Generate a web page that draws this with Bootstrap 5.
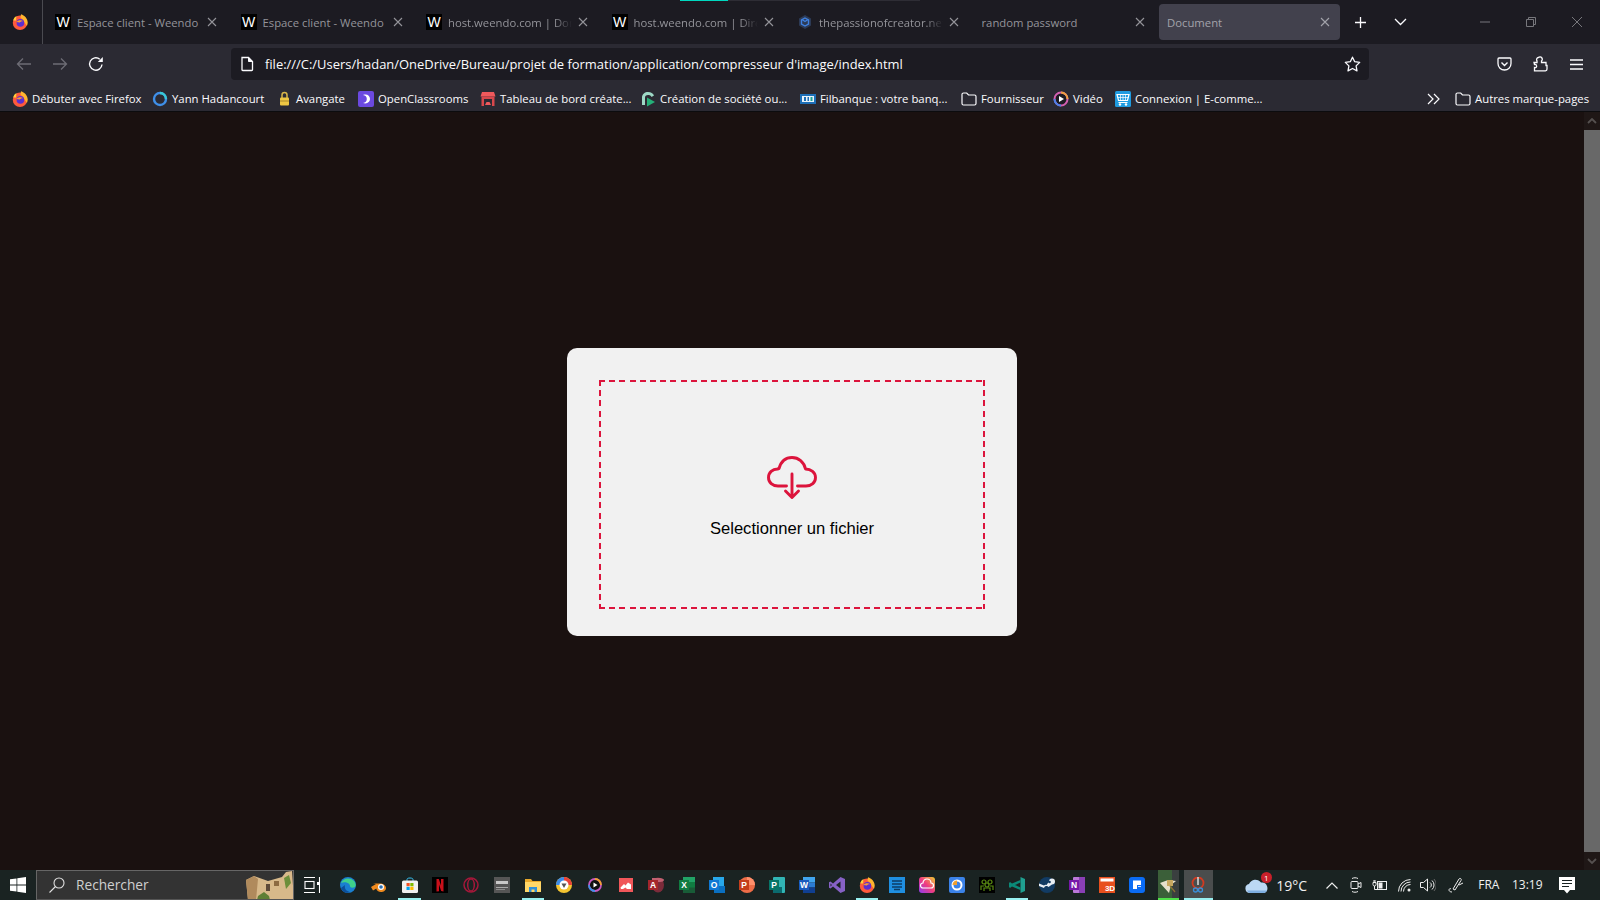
<!DOCTYPE html>
<html lang="fr">
<head>
<meta charset="UTF-8">
<title>Document</title>
<link href="https://cdn.jsdelivr.net/npm/bootstrap@5.3.2/dist/css/bootstrap.min.css" rel="stylesheet">
<style>
html, body { height: 100%; overflow: hidden; }
body { background: #1a1110; font-family: "Open Sans", "Noto Sans", sans-serif; color: #fbfbfe; }
svg { display: block; flex-shrink: 0; }

/* tab strip */
.tab-strip { height: 44px; background: #1c1b22; }
.ff-cell { width: 43px; height: 44px; border-right: 1px solid #4a4a50; }
.tab-row { gap: 4.5px; margin-left: 3px; }
.fx-tab { width: 181px; height: 36px; margin-top: 4px; padding: 0 10px 0 9px; border-radius: 4px; font-size: 11.3px; color: #94949a; gap: 6px; }
.fx-tab.no-fav { padding-left: 8px; }
.fx-tab.active { background: #42414d; color: #a3a3ab; }
.fx-tab .tab-title { flex: 1; white-space: nowrap; overflow: hidden; min-width: 0; padding-top: 2px; }
.fx-tab .faded { -webkit-mask-image: linear-gradient(90deg, #000 86%, transparent 100%); mask-image: linear-gradient(90deg, #000 86%, transparent 100%); }
.fav-w { width: 16px; height: 16px; background: #000; color: #fff; font: 14px/16px "Liberation Sans", sans-serif; text-align: center; }
.strip-btn { width: 40px; height: 44px; }
.win-btn { width: 46px; height: 44px; }
.load-line { position: absolute; left: 680px; top: 0; width: 48px; height: 1px; background: #00d8c0; }
.load-track { position: absolute; left: 728px; top: 0; width: 192px; height: 1px; background: #2e2d35; }

/* toolbar */
.tool-bar { height: 40px; background: #2b2a33; padding-left: 6px; }
.nav-btn { width: 36px; height: 40px; }
.url-bar { width: 1138px; height: 32px; margin-left: 117px; margin-top: 4px; padding: 0 8px 0 9px; background: #1c1b22; border-radius: 4px; font-size: 12.95px; color: #fbfbfe; gap: 11px; }
.url-text { flex: 1; white-space: nowrap; padding-top: 2px; }
.tool-end { width: 36px; height: 40px; }
.tool-right { margin-left: 117px; }

/* bookmarks */
.book-bar { height: 28px; background: #2b2a33; padding-left: 12px; font-size: 11.35px; border-bottom: 1px solid #0c0c0e; }
.book-item { gap: 4px; white-space: nowrap; height: 27px; padding-top: 2px; }
.book-item:nth-child(1) { width: 140px; }
.book-item:nth-child(2) { width: 125px; }
.book-item:nth-child(3) { width: 81px; }
.book-item:nth-child(4) { width: 122px; }
.book-item:nth-child(5) { width: 161px; }
.book-item:nth-child(6) { width: 159px; }
.book-item:nth-child(7) { width: 161px; }
.book-item:nth-child(8) { width: 92px; }
.book-item:nth-child(9) { width: 62px; }
.book-item:nth-child(10) { width: 312px; }
.book-item:nth-child(11) { width: 28px; }

/* page */
.page-zone { min-height: 0; }
.scroll-rail { width: 16px; background: #1f1716; }
.rail-arrow { height: 18px; }
.rail-thumb { flex: 1; background: #686868; }
.upload-main { padding-top: 2px; }
.upload-box { width: 450px; height: 288px; padding: 32px 32px 27px; background: #f1f1f1; border: 0; border-radius: 10px; }
.drop-zone {
  height: 229px; gap: 19px; cursor: pointer; margin: 0; padding-top: 6px;
  background:
    repeating-linear-gradient(90deg, #dc143c 0 6px, transparent 6px 10.2px) top / 100% 2px no-repeat,
    repeating-linear-gradient(90deg, #dc143c 0 6px, transparent 6px 10.2px) bottom / 100% 2px no-repeat,
    repeating-linear-gradient(180deg, #dc143c 0 6px, transparent 6px 10.2px) left / 2px 100% no-repeat,
    repeating-linear-gradient(180deg, #dc143c 0 6px, transparent 6px 10.2px) right / 2px 100% no-repeat;
}
.drop-label { font: 16.6px/20px "Liberation Sans", Arial, sans-serif; color: #000; }

/* taskbar */
.task-bar { height: 30px; background: #1a2322; }
.start-cell { width: 36px; }
.search-box { width: 258px; height: 30px; background: #333; border: 1px solid #666; border-bottom-color: #555; padding-left: 12px; font-size: 13.7px; color: #cfcfcf; gap: 11px; overflow: hidden; }
.search-art { margin-left: auto; margin-right: -1px; }
.view-cell { width: 38.5px; padding-right: 2px; }
.app-cell { width: 30.85px; height: 30px; }
.app-cell.narrow { width: 30px; }
.app-cell.on::after, .run-cell::after { content: ""; position: absolute; left: 4px; right: 4px; bottom: 0; height: 2px; background: #99f0f0; }
.run-cell { height: 30px; }
.run-a { width: 21px; margin-left: 6px; background: linear-gradient(90deg, #3b5f39 0 14px, #3a3f3f 14px); }
.run-a::after { left: 0 !important; right: 0 !important; background: #4fe04a !important; }
.run-b { width: 29px; margin-left: 5px; background: #4a4d4d; }
.run-b::after { left: 0 !important; right: 0 !important; }
.tray { margin-left: 32px; display: grid; grid-template-columns: 24px 46px 34px 15px 32px 18px 28px 28px 38px 39px 40px; align-items: center; height: 30px; font-size: 12px; color: #f0f0f0; }
.tray > * { justify-self: center; }
.temp-text { font-size: 14px; }
.weather { position: relative; }
.weather-dot { position: absolute; right: -3px; top: -6px; width: 11px; height: 11px; border-radius: 50%; background: #c8202a; color: #fff; font-size: 8px; line-height: 11px; text-align: center; }
</style>
</head>
<body class="d-flex flex-column">

<svg width="0" height="0" class="position-absolute">
  <defs>
    <symbol id="ic-firefox" viewBox="0 0 16 16">
      <circle cx="8" cy="8.800" r="7.200" fill="#ff5a3c"/>
      <path d="M9 .3c3.500 1 6.700 4.500 6.700 8.200 0 1.200-.3 2.300-.8 3.500L11 6 8.500 3.500z" fill="#ffb52e"/>
      <path d="M1.200 6.500c.7-2.500 1.800-3.800 3.300-4.500L4 6.500z" fill="#ffcf3a"/>
      <circle cx="8.400" cy="8.900" r="3.800" fill="#5c2fd0"/>
      <path d="M4.500 8c1.300-1.800 4.700-2.500 7-.6-1.200-.2-3 .1-3.700 1.100z" fill="#ff9a2e"/>
    </symbol>
    <symbol id="ic-folder" viewBox="0 0 16 16">
      <path d="M1 3.500C1 2.700 1.700 2 2.500 2h3.200L7.500 4h6C14.300 4 15 4.700 15 5.500v7c0 .8-.7 1.500-1.500 1.500h-11C1.700 14 1 13.300 1 12.500z" fill="none" stroke="#fbfbfe" stroke-width="1.200"/>
    </symbol>
    <symbol id="ic-close" viewBox="0 0 10 10">
      <path d="M1 1l8 8M9 1L1 9" stroke="currentColor" stroke-width="1.100" fill="none"/>
    </symbol>
  </defs>
</svg>

<!-- tab strip -->
<div class="tab-strip d-flex position-relative">
  <div class="load-line"></div>
  <div class="load-track"></div>
  <div class="ff-cell d-flex align-items-center ps-2 ms-0">
    <svg width="16" height="16" class="ms-1"><use href="#ic-firefox"/></svg>
  </div>
  <div class="tab-row d-flex">
    <div class="fx-tab d-flex align-items-center">
      <span class="fav-w">W</span><span class="tab-title">Espace client - Weendo</span>
      <svg width="10" height="10"><use href="#ic-close"/></svg>
    </div>
    <div class="fx-tab d-flex align-items-center">
      <span class="fav-w">W</span><span class="tab-title">Espace client - Weendo</span>
      <svg width="10" height="10"><use href="#ic-close"/></svg>
    </div>
    <div class="fx-tab d-flex align-items-center">
      <span class="fav-w">W</span><span class="tab-title faded">host.weendo.com | Dom</span>
      <svg width="10" height="10"><use href="#ic-close"/></svg>
    </div>
    <div class="fx-tab d-flex align-items-center">
      <span class="fav-w">W</span><span class="tab-title faded">host.weendo.com | Direc</span>
      <svg width="10" height="10"><use href="#ic-close"/></svg>
    </div>
    <div class="fx-tab d-flex align-items-center">
      <svg width="16" height="16" viewBox="0 0 16 16"><path d="M8 1l6 3.500v7L8 15l-6-3.500v-7z" fill="#2c3a55"/><path d="M8 4l3.500 2v4L8 12l-3.500-2V6z" fill="none" stroke="#3f80e0" stroke-width="1.400"/><path d="M5 5.500l3 2 3-2" fill="none" stroke="#3f80e0" stroke-width="1.400"/></svg>
      <span class="tab-title faded">thepassionofcreator.net/</span>
      <svg width="10" height="10"><use href="#ic-close"/></svg>
    </div>
    <div class="fx-tab no-fav d-flex align-items-center">
      <span class="tab-title">random password</span>
      <svg width="10" height="10"><use href="#ic-close"/></svg>
    </div>
    <div class="fx-tab no-fav active d-flex align-items-center">
      <span class="tab-title">Document</span>
      <svg width="10" height="10"><use href="#ic-close"/></svg>
    </div>
  </div>
  <div class="strip-btn d-flex align-items-center justify-content-center ms-0">
    <svg width="13" height="13" viewBox="0 0 13 13"><path d="M6.500 1v11M1 6.500h11" stroke="#fbfbfe" stroke-width="1.300"/></svg>
  </div>
  <div class="strip-btn d-flex align-items-center justify-content-center">
    <svg width="13" height="8" viewBox="0 0 13 8"><path d="M1 1l5.500 5.500L12 1" fill="none" stroke="#fbfbfe" stroke-width="1.300"/></svg>
  </div>
  <div class="win-btn d-flex align-items-center justify-content-center ms-auto">
    <svg width="10" height="2" viewBox="0 0 10 2"><path d="M0 1h10" stroke="#77777c" stroke-width="1"/></svg>
  </div>
  <div class="win-btn d-flex align-items-center justify-content-center">
    <svg width="10" height="10" viewBox="0 0 10 10"><path d="M.5 2.500h7v7h-7zM2.500 2.500v-2h7v7h-2" fill="none" stroke="#77777c"/></svg>
  </div>
  <div class="win-btn d-flex align-items-center justify-content-center">
    <svg width="10" height="10" viewBox="0 0 10 10"><path d="M0 0l10 10M10 0L0 10" stroke="#77777c"/></svg>
  </div>
</div>

<!-- toolbar -->
<div class="tool-bar d-flex">
  <div class="nav-btn d-flex align-items-center justify-content-center">
    <svg width="16" height="14" viewBox="0 0 16 14"><path d="M15 7H1.500M7 1.500L1.500 7 7 12.500" fill="none" stroke="#6d6c75" stroke-width="1.300"/></svg>
  </div>
  <div class="nav-btn d-flex align-items-center justify-content-center">
    <svg width="16" height="14" viewBox="0 0 16 14"><path d="M1 7h13.500M9 1.500L14.500 7 9 12.500" fill="none" stroke="#6d6c75" stroke-width="1.300"/></svg>
  </div>
  <div class="nav-btn d-flex align-items-center justify-content-center">
    <svg width="16" height="16" viewBox="0 0 16 16"><path d="M14 8.500A6.200 6.200 0 1 1 11.800 3.200" fill="none" stroke="#fbfbfe" stroke-width="1.400"/><path d="M14.800 1v5h-5z" fill="#fbfbfe"/></svg>
  </div>
  <div class="url-bar d-flex align-items-center">
    <svg width="14" height="16" viewBox="0 0 14 16"><path d="M2 1.500h6.500L12.500 5.500v8.200c0 .5-.4.800-.8.800H2.800c-.5 0-.8-.4-.8-.8z" fill="none" stroke="#fbfbfe" stroke-width="1.300"/><path d="M8.500 1.500v4h4" fill="#fbfbfe" stroke="#fbfbfe"/></svg>
    <span class="url-text">file:///C:/Users/hadan/OneDrive/Bureau/projet de formation/application/compresseur d'image/index.html</span>
    <svg width="17" height="16" viewBox="0 0 17 16"><path d="M8.500 1.200l2.200 4.500 5 .7-3.600 3.500.9 5-4.500-2.400L4 14.900l.9-5L1.300 6.400l5-.7z" fill="none" stroke="#fbfbfe" stroke-width="1.300" stroke-linejoin="round"/></svg>
  </div>
  <div class="tool-end tool-right d-flex align-items-center justify-content-center">
    <svg width="15" height="14" viewBox="0 0 15 14"><path d="M2 1h11c.6 0 1 .4 1 1v4.500C14 10.500 11 13 7.500 13S1 10.500 1 6.500V2c0-.6.4-1 1-1z" fill="none" stroke="#fbfbfe" stroke-width="1.300"/><path d="M4.500 5.500l3 3 3-3" fill="none" stroke="#fbfbfe" stroke-width="1.400"/></svg>
  </div>
  <div class="tool-end d-flex align-items-center justify-content-center">
    <svg width="15" height="16" viewBox="0 0 15 16"><path d="M1 6.500h3V5a2.200 2.200 0 0 1 1.500-3.500A2.200 2.200 0 0 1 8.500 5v1.500H13v3h1V13c0 1-.5 1.800-1.500 1.800H1.500V11.500a1.500 1.500 0 0 0 2-2 1.500 1.500 0 0 0-2-1z" fill="none" stroke="#fbfbfe" stroke-width="1.300"/></svg>
  </div>
  <div class="tool-end d-flex align-items-center justify-content-center">
    <svg width="13" height="11" viewBox="0 0 13 11"><path d="M0 1h13M0 5.500h13M0 10h13" stroke="#fbfbfe" stroke-width="1.300"/></svg>
  </div>
</div>

<!-- bookmarks -->
<div class="book-bar d-flex">
  <div class="book-item d-flex align-items-center"><svg width="16" height="16"><use href="#ic-firefox"/></svg>Débuter avec Firefox</div>
  <div class="book-item d-flex align-items-center">
    <svg width="16" height="16" viewBox="0 0 16 16"><circle cx="8" cy="8" r="6" fill="none" stroke="#3f8fe8" stroke-width="2.400"/><path d="M8 2a6 6 0 0 1 6 6" fill="none" stroke="#38c9d8" stroke-width="2.400"/></svg>Yann Hadancourt</div>
  <div class="book-item d-flex align-items-center">
    <svg width="15" height="16" viewBox="0 0 15 16"><path d="M5 7V4a2.500 2.500 0 0 1 5 0v3" fill="none" stroke="#d9b64a" stroke-width="1.500"/><rect x="3" y="6.500" width="9" height="8" rx="1" fill="#eec643"/><path d="M3 10h9" stroke="#a8862a"/></svg>Avangate</div>
  <div class="book-item d-flex align-items-center">
    <svg width="16" height="16" viewBox="0 0 16 16"><rect width="16" height="16" rx="2" fill="#6b49e0"/><path d="M5 4c4-1.500 7 1 7 4s-3 5.500-7 4c2.500-.3 3.800-2 3.800-4S7.500 4.300 5 4z" fill="#fff"/></svg>OpenClassrooms</div>
  <div class="book-item d-flex align-items-center">
    <svg width="16" height="16" viewBox="0 0 16 16"><path d="M2 1h12l1.500 4.500H.5z" fill="#f0595c"/><rect x="1.500" y="5.500" width="13" height="9.500" fill="#d8484c"/><rect x="4" y="8" width="8" height="7" fill="#2b2a33"/><path d="M5 14l1.500-3h3l1.500 3" fill="#f0595c"/></svg>Tableau de bord créate...</div>
  <div class="book-item d-flex align-items-center">
    <svg width="15" height="16" viewBox="0 0 15 16"><path d="M1 14V6.500C1 3 4 1 7 1s5 1.500 6 3.500L10.500 6C10 4.500 8.500 4 7 4 5 4 4 5 4 6.500V14z" fill="#9ed8c6"/><path d="M6 6.500l8 4.500-8 4.500z" fill="#25b078"/></svg>Création de société ou...</div>
  <div class="book-item d-flex align-items-center">
    <svg width="16" height="10" viewBox="0 0 16 10"><rect width="16" height="10" fill="#1d6fb8"/><rect x="2" y="2" width="12" height="6" fill="#e9f3fb"/><rect x="4" y="3" width="2" height="4" fill="#1d6fb8"/><rect x="7.500" y="3" width="1.500" height="4" fill="#1d6fb8"/><rect x="10.500" y="3" width="2" height="4" fill="#1aa59a"/></svg>Filbanque : votre banq...</div>
  <div class="book-item d-flex align-items-center"><svg width="16" height="16"><use href="#ic-folder"/></svg>Fournisseur</div>
  <div class="book-item d-flex align-items-center">
    <svg width="16" height="16" viewBox="0 0 16 16"><circle cx="8" cy="8" r="6.500" fill="#1c1b22" stroke="#d35fb0" stroke-width="2"/><path d="M8 1.500A6.500 6.500 0 0 1 14.500 8" fill="none" stroke="#f0a040" stroke-width="2"/><path d="M1.500 8A6.500 6.500 0 0 0 8 14.500" fill="none" stroke="#4a80e8" stroke-width="2"/><path d="M6 5l5 3-5 3z" fill="#fff"/></svg>Vidéo</div>
  <div class="book-item d-flex align-items-center">
    <svg width="16" height="16" viewBox="0 0 16 16"><rect width="16" height="16" rx="1.500" fill="#1f9be0"/><path d="M2 3.500h12l-1.500 6h-9zM3.500 11.500h9" fill="none" stroke="#fff" stroke-width="1.200"/><path d="M5.500 3.500v6M8 3.500v6M10.500 3.500v6M2.500 6.500h11" stroke="#fff" stroke-width=".7"/><circle cx="5" cy="13.500" r="1.200" fill="#fff"/><circle cx="11" cy="13.500" r="1.200" fill="#fff"/></svg>Connexion | E-comme...</div>
  <div class="book-item d-flex align-items-center">
    <svg width="13" height="12" viewBox="0 0 13 12"><path d="M1 1l5 5-5 5M7 1l5 5-5 5" fill="none" stroke="#fbfbfe" stroke-width="1.200"/></svg>
  </div>
  <div class="book-item d-flex align-items-center"><svg width="16" height="16"><use href="#ic-folder"/></svg>Autres marque-pages</div>
</div>

<!-- page -->
<div class="page-zone flex-grow-1 d-flex">
  <main class="upload-main flex-grow-1 d-flex align-items-center justify-content-center">
    <div class="card upload-box">
      <label class="drop-zone d-flex flex-column align-items-center justify-content-center">
        <input type="file" class="d-none">
        <svg width="50" height="44" viewBox="0 0 50 44" fill="none" stroke="#dc143c" stroke-width="2.900" stroke-linecap="round" stroke-linejoin="round">
          <path d="M19.500 30H11C5.500 30 1.500 26.500 1.500 21.500 1.500 16.500 5.500 13 10.500 13L12 12.500C14 5.500 19 1.500 25 1.500 31.500 1.500 37 6 38.500 13 44 13 48.500 16.500 48.500 21.500 48.500 26.500 44.500 30 39 30H30.500"/>
          <path d="M25 18V41.500M18.500 35L25 41.500 31.500 35"/>
        </svg>
        <span class="drop-label">Selectionner un fichier</span>
      </label>
    </div>
  </main>
  <div class="scroll-rail d-flex flex-column">
    <div class="rail-arrow d-flex align-items-center justify-content-center">
      <svg width="10" height="6" viewBox="0 0 10 6"><path d="M1 5l4-4 4 4" fill="none" stroke="#55504f" stroke-width="1.800"/></svg>
    </div>
    <div class="rail-thumb"></div>
    <div class="rail-arrow d-flex align-items-center justify-content-center">
      <svg width="10" height="6" viewBox="0 0 10 6"><path d="M1 1l4 4 4-4" fill="none" stroke="#55504f" stroke-width="1.800"/></svg>
    </div>
  </div>
</div>

<!-- taskbar -->
<footer class="task-bar d-flex align-items-center">
  <div class="start-cell d-flex justify-content-center">
    <svg width="16" height="16" viewBox="0 0 16 16" fill="#fff"><path d="M0 2.300l6.500-.9v6.200H0zM7.300 1.300L16 0v7.600H7.300zM0 8.400h6.500v6.200L0 13.700zM7.300 8.400H16V16l-8.700-1.300z"/></svg>
  </div>
  <div class="search-box d-flex align-items-center">
    <svg width="16" height="16" viewBox="0 0 16 16" fill="none" stroke="#e0e0e0" stroke-width="1.100"><circle cx="10" cy="6" r="5"/><path d="M6.500 9.500L.5 15.500"/></svg>
    <span>Rechercher</span>
    <svg class="search-art" width="50" height="30" viewBox="0 0 50 30"><path d="M2 10l8-4 14 5 14-4 4-5 6-1 2 29H4z" fill="#d8b98a"/><path d="M2 10l8-4 4 3-2 21H4z" fill="#b08a5c"/><path d="M40 8l5-3 2 8-5 6z" fill="#6d8f3a"/><path d="M14 26l6-4 5 4 1 4H13z" fill="#5f7f35"/><rect x="22" y="14" width="4" height="7" fill="#5e4a38"/><path d="M30 11h5v5h-5z" fill="#8d6b42"/></svg>
  </div>
  <div class="view-cell d-flex justify-content-center">
    <svg width="16" height="16" viewBox="0 0 16 16" fill="none" stroke="#fff" stroke-width="1.100"><path d="M0 .5h11M0 15.500h11M15.500 0v16"/><rect x="1" y="4.500" width="9" height="7"/><rect x="13" y="5" width="3" height="3" fill="#fff" stroke="none"/></svg>
  </div>

  <div class="app-cell position-relative d-flex align-items-center justify-content-center">
    <svg width="16" height="16" viewBox="0 0 16 16"><circle cx="8" cy="8" r="8" fill="#1a7fd0"/><path d="M1 6c2-5 9-6 13-2 2 2 2 5 1 6-2 1-5 1-5-1 0-3-5-5-9-3z" fill="#3fd18a"/><path d="M5 8c-1 4 2 7 6 7-4 2-9 0-10-4z" fill="#0c4f9a"/></svg>
  </div>
  <div class="app-cell position-relative d-flex align-items-center justify-content-center">
    <svg width="16" height="14" viewBox="0 0 16 14"><path d="M0 9l5-3-3-.5h7c3 0 6 2 6 4.500S12.500 14 10 14 5.500 12.500 5.300 10.500L2 12.500z" fill="#f08a1e"/><circle cx="10" cy="9" r="3" fill="#fff"/><circle cx="10" cy="9" r="1.800" fill="#2d6fb0"/></svg>
  </div>
  <div class="app-cell on position-relative d-flex align-items-center justify-content-center">
    <svg width="16" height="16" viewBox="0 0 16 16"><path d="M5 4V2.500C5 1.500 6 1 8 1s3 .5 3 1.500V4" fill="none" stroke="#38c0f0"/><rect y="3.500" width="16" height="12.500" rx="1.500" fill="#f0f0f0"/><rect x="4.500" y="6" width="3.200" height="3.200" fill="#f25022"/><rect x="8.300" y="6" width="3.200" height="3.200" fill="#7fba00"/><rect x="4.500" y="9.800" width="3.200" height="3.200" fill="#00a4ef"/><rect x="8.300" y="9.800" width="3.200" height="3.200" fill="#ffb900"/></svg>
  </div>
  <div class="app-cell position-relative d-flex align-items-center justify-content-center">
    <svg width="16" height="16" viewBox="0 0 16 16"><rect width="16" height="16" fill="#000"/><path d="M4.500 2h2.300L9 8.500V2h2.500v12.500L9.200 14 7 7.500v6.800l-2.500.3z" fill="#c8101a"/></svg>
  </div>
  <div class="app-cell position-relative d-flex align-items-center justify-content-center">
    <svg width="16" height="16" viewBox="0 0 16 16" fill="none" stroke="#a5183a" stroke-width="1.500"><circle cx="8" cy="8" r="7"/><ellipse cx="8" cy="8" rx="3.300" ry="6"/></svg>
  </div>
  <div class="app-cell position-relative d-flex align-items-center justify-content-center">
    <svg width="16" height="16" viewBox="0 0 16 16"><rect width="16" height="16" fill="#555"/><rect x="2" y="4" width="12" height="3" fill="#c8c8c8"/><rect x="2" y="10" width="12" height="1" fill="#a8a8a8"/><rect x="2" y="12" width="9" height="1" fill="#8a8a8a"/></svg>
  </div>
  <div class="app-cell on position-relative d-flex align-items-center justify-content-center">
    <svg width="16" height="14" viewBox="0 0 16 14"><path d="M0 1h6l1.500 2H16v11H0z" fill="#e8a82a"/><rect y="4" width="16" height="10" fill="#ffd768"/><path d="M4 14V9h8v5h-2.500v-2.500h-3V14z" fill="#2f8fd8"/></svg>
  </div>
  <div class="app-cell position-relative d-flex align-items-center justify-content-center">
    <svg width="16" height="16" viewBox="0 0 16 16"><circle cx="8" cy="8" r="8" fill="#f4c430"/><path d="M8 0a8 8 0 0 1 8 8H8z" fill="#e8403a"/><path d="M0 8a8 8 0 0 1 8-8v8z" fill="#3b8ae8"/><circle cx="8" cy="8" r="4.500" fill="#fff"/><path d="M5.500 6.500h5L8 11z" fill="#555"/></svg>
  </div>
  <div class="app-cell position-relative d-flex align-items-center justify-content-center">
    <svg width="14" height="14" viewBox="0 0 14 14"><circle cx="7" cy="7" r="6" fill="#111" stroke="#c85ac0" stroke-width="1.800"/><path d="M7 1a6 6 0 0 1 6 6" fill="none" stroke="#f0a030" stroke-width="1.800"/><path d="M1 7a6 6 0 0 0 6 6" fill="none" stroke="#3f90e8" stroke-width="1.800"/><path d="M5.500 4.500l4 2.500-4 2.500z" fill="#fff"/></svg>
  </div>
  <div class="app-cell position-relative d-flex align-items-center justify-content-center">
    <svg width="14" height="14" viewBox="0 0 14 14"><rect width="14" height="14" fill="#f0575a"/><path d="M1.500 9.500L5 6l1.500 1.500L9 4.500l3 2v4.500H8L6.500 9.500 4 11H2z" fill="#fff"/></svg>
  </div>
  <div class="app-cell position-relative d-flex align-items-center justify-content-center">
    <svg width="16" height="16" viewBox="0 0 16 16"><ellipse cx="10" cy="8" rx="6" ry="7.500" fill="#7c2b3a"/><path d="M4 1h8c2 0 4 1 4 2s-2 2-4 2H4z" fill="#c06070"/><rect y="3" width="10" height="10" fill="#a4262c"/><text x="5" y="11" text-anchor="middle" font-family="Liberation Sans" font-size="8.500" font-weight="700" fill="#fff">A</text></svg>
  </div>
  <div class="app-cell narrow position-relative d-flex align-items-center justify-content-center">
    <svg width="16" height="16" viewBox="0 0 16 16"><rect x="4" width="12" height="16" fill="#21a366"/><rect x="10" y="5" width="6" height="6" fill="#107c41"/><rect x="4" y="10.500" width="12" height="5.500" fill="#185c37"/><rect y="3" width="10" height="10" fill="#107c41"/><text x="5" y="11" text-anchor="middle" font-family="Liberation Sans" font-size="8.500" font-weight="700" fill="#fff">X</text></svg>
  </div>
  <div class="app-cell narrow position-relative d-flex align-items-center justify-content-center">
    <svg width="16" height="16" viewBox="0 0 16 16"><rect x="4" width="11" height="9" fill="#28a8ea"/><path d="M5 9h11v7H5z" fill="#0a6fc0"/><rect y="3" width="10" height="10" fill="#0f78d4"/><text x="5" y="11" text-anchor="middle" font-family="Liberation Sans" font-size="8.500" font-weight="700" fill="#fff">O</text></svg>
  </div>
  <div class="app-cell narrow position-relative d-flex align-items-center justify-content-center">
    <svg width="16" height="16" viewBox="0 0 16 16"><circle cx="8" cy="8" r="8" fill="#ed6c47"/><path d="M8 0a8 8 0 0 1 8 8H8z" fill="#ff8f6b"/><rect y="3" width="10" height="10" fill="#c43e1c"/><text x="5" y="11" text-anchor="middle" font-family="Liberation Sans" font-size="8.500" font-weight="700" fill="#fff">P</text></svg>
  </div>
  <div class="app-cell narrow position-relative d-flex align-items-center justify-content-center">
    <svg width="16" height="16" viewBox="0 0 16 16"><rect x="4" width="12" height="16" rx="1" fill="#31b5b5"/><rect x="4" y="10" width="9" height="6" fill="#0b6a6e"/><rect y="3" width="10" height="10" fill="#077568"/><text x="5" y="11" text-anchor="middle" font-family="Liberation Sans" font-size="8.500" font-weight="700" fill="#fff">P</text></svg>
  </div>
  <div class="app-cell narrow position-relative d-flex align-items-center justify-content-center">
    <svg width="16" height="16" viewBox="0 0 16 16"><rect x="4" width="12" height="5.500" fill="#41a5ee"/><rect x="4" y="5.500" width="12" height="5" fill="#2b7cd3"/><rect x="4" y="10.500" width="12" height="5.500" fill="#103f91"/><rect y="3" width="10" height="10" fill="#185abd"/><text x="5" y="11" text-anchor="middle" font-family="Liberation Sans" font-size="8.500" font-weight="700" fill="#fff">W</text></svg>
  </div>
  <div class="app-cell narrow position-relative d-flex align-items-center justify-content-center">
    <svg width="16" height="16" viewBox="0 0 16 16"><path d="M11.500 0L16 2v12l-4.500 2L4 9.500 1.500 11.500 0 10.800V5.200l1.500-.7L4 6.500zM11.500 4.500L7 8l4.500 3.500zM1.500 6.500v3L3 8z" fill="#8661c5"/></svg>
  </div>
  <div class="app-cell narrow on position-relative d-flex align-items-center justify-content-center">
    <svg width="16" height="16"><use href="#ic-firefox"/></svg>
  </div>
  <div class="app-cell narrow position-relative d-flex align-items-center justify-content-center">
    <svg width="16" height="16" viewBox="0 0 16 16"><rect width="16" height="16" fill="#1f8fe0"/><path d="M3 4h10M3 7h10M3 10h10M5 12.500h6" stroke="#0c3d66" stroke-width="1.300"/></svg>
  </div>
  <div class="app-cell narrow position-relative d-flex align-items-center justify-content-center">
    <svg width="16" height="16" viewBox="0 0 16 16"><defs><linearGradient id="cc-grad" x1="0" y1="1" x2="1" y2="0"><stop offset="0" stop-color="#8c3cf0"/><stop offset=".5" stop-color="#f03c80"/><stop offset="1" stop-color="#f0d030"/></linearGradient></defs><rect width="16" height="16" rx="3" fill="url(#cc-grad)"/><path d="M4 11a2.500 2.500 0 0 1 0-5 4 4 0 0 1 8 0 2.500 2.500 0 0 1 0 5z" fill="none" stroke="#fff" stroke-width="1.200"/></svg>
  </div>
  <div class="app-cell narrow position-relative d-flex align-items-center justify-content-center">
    <svg width="16" height="16" viewBox="0 0 16 16"><rect width="16" height="16" rx="2" fill="#3b82e8"/><circle cx="8" cy="8" r="4.500" fill="none" stroke="#fff" stroke-width="2"/><path d="M3.500 8A4.500 4.500 0 0 1 8 3.500V8z" fill="#f0a030"/></svg>
  </div>
  <div class="app-cell narrow position-relative d-flex align-items-center justify-content-center">
    <svg width="16" height="16" viewBox="0 0 16 16"><rect width="16" height="16" fill="#000"/><g fill="none" stroke="#5a8c12" stroke-width="1.200"><circle cx="5" cy="5" r="2"/><circle cx="11" cy="5" r="2"/><circle cx="8" cy="8" r="2"/><path d="M2 13V9h3M14 13V9h-3M5 14v-3h6v3"/></g></svg>
  </div>
  <div class="app-cell narrow on position-relative d-flex align-items-center justify-content-center">
    <svg width="16" height="16" viewBox="0 0 16 16"><path d="M11.500 0L16 2v12l-4.500 2z" fill="#1fa090"/><path d="M11.500 3v2.500L6 8l5.500 2.500V13L3 9.500 1 11 0 10V6l1-1 2 1.500z" fill="#0b8a78"/></svg>
  </div>
  <div class="app-cell narrow position-relative d-flex align-items-center justify-content-center">
    <svg width="16" height="16" viewBox="0 0 16 16"><circle cx="8" cy="8" r="8" fill="#123b63"/><path d="M0 9l5 2a2.500 2.500 0 0 1 4.500-1L13 7.500a3 3 0 1 0-3-3L7.500 8A2.500 2.500 0 0 0 5 8.500L0 6.500z" fill="#e8eef4"/><circle cx="10.500" cy="5" r="1.300" fill="#123b63"/></svg>
  </div>
  <div class="app-cell narrow position-relative d-flex align-items-center justify-content-center">
    <svg width="16" height="16" viewBox="0 0 16 16"><rect x="4" width="12" height="16" rx="1" fill="#ba77d8"/><rect x="10" y="0" width="6" height="16" fill="#8a3fb5"/><rect y="3" width="10" height="10" fill="#7719aa"/><text x="5" y="11" text-anchor="middle" font-family="Liberation Sans" font-size="8.500" font-weight="700" fill="#fff">N</text></svg>
  </div>
  <div class="app-cell narrow position-relative d-flex align-items-center justify-content-center">
    <svg width="16" height="16" viewBox="0 0 16 16"><rect width="16" height="16" fill="#e8501e"/><rect x="1.500" y="1.500" width="13" height="3" fill="#fff"/><text x="11" y="14" text-anchor="middle" font-family="Liberation Sans" font-size="8" font-weight="700" fill="#fff">3D</text></svg>
  </div>
  <div class="app-cell narrow position-relative d-flex align-items-center justify-content-center">
    <svg width="16" height="16" viewBox="0 0 16 16"><rect width="16" height="16" rx="3" fill="#0a6cf5"/><path d="M4 3.500h8v4.500H8v4H4z" fill="#fff"/><path d="M9 9h3v1H9z" fill="#cfe0ff"/></svg>
  </div>
  <div class="run-cell run-a position-relative d-flex align-items-center justify-content-center">
    <svg width="16" height="16" viewBox="0 0 16 16"><path d="M0 6l8-3 8 1-5 4-2 8z" fill="#e6e0cc"/><rect x="7" y="3" width="6" height="6" fill="#c8a860"/><path d="M10 9l5 6" stroke="#8a7030" stroke-width="1.300"/></svg>
  </div>
  <div class="run-cell run-b position-relative d-flex align-items-center justify-content-center">
    <svg width="16" height="16" viewBox="0 0 16 16"><circle cx="8" cy="6" r="5.500" fill="none" stroke="#d23a20" stroke-width="1.800"/><path d="M8 0v8" stroke="#ddd" stroke-width="1.500"/><circle cx="5.500" cy="13" r="2" fill="none" stroke="#3a8fd8" stroke-width="1.300"/><circle cx="10.500" cy="13" r="2" fill="none" stroke="#3a8fd8" stroke-width="1.300"/></svg>
  </div>

  <div class="tray">
    <div class="weather">
      <svg width="24" height="15" viewBox="0 0 24 15"><path d="M5 15a4.500 4.500 0 0 1-1-8.900A7 7 0 0 1 16 4.500 5.500 5.500 0 0 1 19 15z" fill="#bcd8f4"/><path d="M2 12.500h20a4 4 0 0 1-3 2.500H5a4 4 0 0 1-3-2.500z" fill="#7eaee0"/></svg>
      <span class="weather-dot">1</span>
    </div>
    <span class="temp-text">19°C</span>
    <svg width="12" height="7" viewBox="0 0 12 7"><path d="M.5 6.500L6 1l5.500 5.500" fill="none" stroke="#eee" stroke-width="1.200"/></svg>
    <svg width="12" height="16" viewBox="0 0 12 16" fill="none" stroke="#eee"><rect x="1" y="4.500" width="7" height="7" rx="1"/><path d="M8 7l3-1.500v5L8 9"/><path d="M2 1.500c2-1 4-1 6 0M2 14.500c2 1 4 1 6 0"/></svg>
    <svg width="16" height="12" viewBox="0 0 16 12" fill="none" stroke="#eee"><rect x="5.500" y="2.500" width="9" height="8"/><rect x="7" y="4" width="3" height="5" fill="#eee"/><path d="M1 3.500h3v2a1.500 1.500 0 0 1-3 0zM2 1v2.500M3 1v2.500M2.500 7v3.500h3"/></svg>
    <svg width="13" height="13" viewBox="0 0 13 13" fill="none" stroke="#eee"><path d="M.5 12.500a12 12 0 0 1 12-12M3 12.500a9.500 9.500 0 0 1 9.500-9.500M5.500 12.500a7 7 0 0 1 7-7" /><circle cx="11" cy="11" r="1.500" fill="#eee" stroke="none"/></svg>
    <svg width="16" height="14" viewBox="0 0 16 14" fill="none" stroke="#eee"><path d="M.5 4.500h3L7.500 1v12l-4-3.500h-3z"/><path d="M10 4.500a3 3 0 0 1 0 5"/><path d="M12 2.500a6 6 0 0 1 0 9" /><path d="M14 1a9 9 0 0 1 0 12" stroke="#666"/></svg>
    <svg width="16" height="16" viewBox="0 0 16 16" fill="none" stroke="#eee"><path d="M4 15c-2 0-3-1-3-2s1-2 2-1M5 12l6-10c1-1.500 3 0 2 1.500L7 13z"/><path d="M11 8l4-2"/></svg>
    <span>FRA</span>
    <span>13:19</span>
    <svg width="16" height="17" viewBox="0 0 16 17"><path d="M0 0h16v13h-5l-3 3.500L5 13H0z" fill="#fff"/><path d="M3 3.500h10M3 6.500h10M3 9.500h7" stroke="#1a2322"/></svg>
  </div>
</footer>

</body>
</html>
